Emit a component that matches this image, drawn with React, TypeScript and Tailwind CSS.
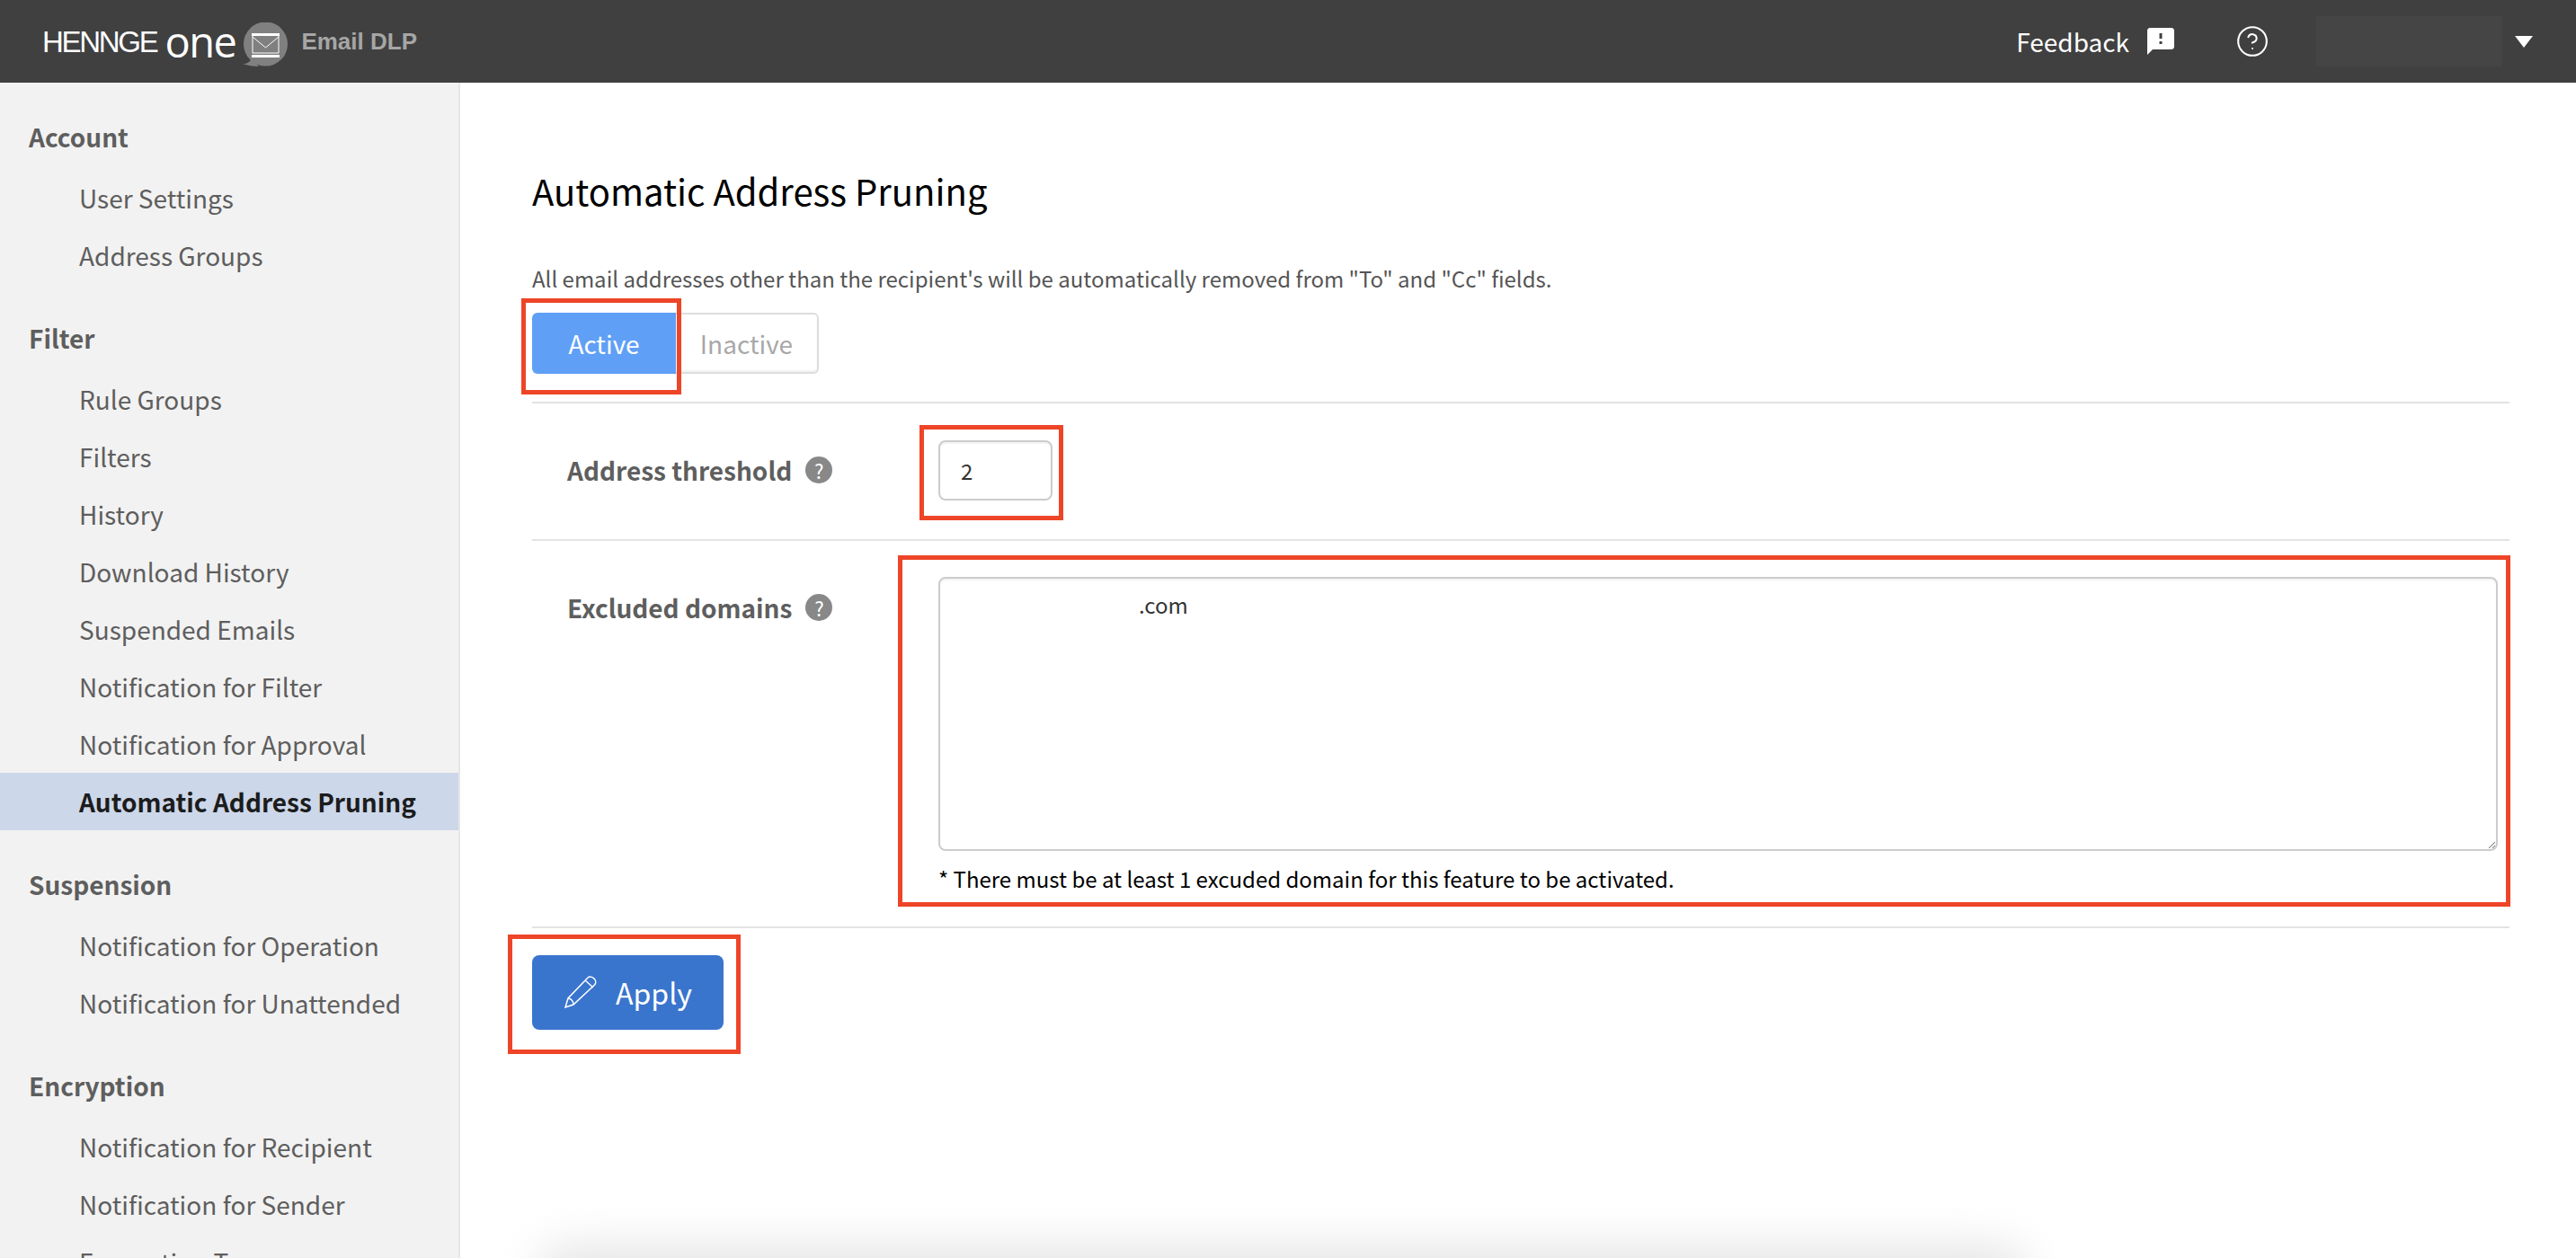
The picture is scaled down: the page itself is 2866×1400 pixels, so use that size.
import { CircleHelp } from "lucide-react"
import { MdFeedback } from "react-icons/md"

const font = { fontFamily: '"Noto Sans CJK JP", "Noto Sans", sans-serif' }

const groups = [
  { title: "Account", items: ["User Settings", "Address Groups"] },
  {
    title: "Filter",
    items: [
      "Rule Groups",
      "Filters",
      "History",
      "Download History",
      "Suspended Emails",
      "Notification for Filter",
      "Notification for Approval",
      "Automatic Address Pruning",
    ],
  },
  { title: "Suspension", items: ["Notification for Operation", "Notification for Unattended"] },
  { title: "Encryption", items: ["Notification for Recipient", "Notification for Sender", "Encryption Types"] },
]

function MailBadge() {
  return (
    <svg width="50" height="49" viewBox="0 0 50 49" className="shrink-0">
      <circle cx="25.5" cy="24" r="24.5" fill="#808080" />
      <path d="M0 46c5 0 8-2 10-6l8 9c-6 0-12-1-18-3z" fill="#808080" />
      <rect x="10" y="12" width="31" height="3" fill="#fff" />
      <rect x="10" y="36" width="31" height="3" fill="#fff" />
      <path d="M11 15v19h29V15M11 16l14.500 12L40 16" fill="none" stroke="#fff" strokeWidth="1" />
    </svg>
  )
}

function PencilIcon() {
  return (
    <svg width="36" height="36" viewBox="0 0 36 36" fill="none" stroke="#fff" strokeWidth="1.500" className="shrink-0">
      <path d="M1 35l3-10L26 2c2-1.500 5-1 7 1s2 5 1 6.500L10 32z" />
      <path d="M4 25c3 0 6 3 6 7M23 5l9 8" />
    </svg>
  )
}

function HelpDot() {
  return (
    <span className="ml-[15px] flex h-[30px] w-[30px] shrink-0 items-center justify-center rounded-full bg-[#888888] text-[22px] leading-none font-normal text-white">
      ?
    </span>
  )
}

function Header() {
  return (
    <header className="flex h-[92px] shrink-0 items-center bg-[#404040] pl-[47px] pr-[48px] text-white">
      <div className="flex items-center">
        <span className="text-[33px] leading-none tracking-[-2.300px]" style={{ fontFamily: '"Liberation Sans", sans-serif' }}>
          HENNGE
        </span>
        <span className="ml-[9px] text-[47px] leading-none tracking-[-1.500px]" style={{ fontFamily: '"Open Sans", sans-serif' }}>
          one
        </span>
        <div className="ml-[8px] mt-[6px]">
          <MailBadge />
        </div>
        <span className="ml-[15px] text-[26px] font-bold text-[#a6a6a6]" style={{ fontFamily: '"Liberation Sans", sans-serif' }}>
          Email DLP
        </span>
      </div>
      <div className="ml-auto flex items-center">
        <span className="text-[28px] leading-none">Feedback</span>
        <MdFeedback className="ml-[17px] text-[36px]" />
        <CircleHelp className="ml-[65px] h-[38px] w-[38px]" strokeWidth={1.300} />
        <div className="ml-[52px] h-[56px] w-[207px] bg-[#454545]" />
        <div className="ml-[14px] h-0 w-0 border-x-[10px] border-t-[13px] border-x-transparent border-t-white" />
      </div>
    </header>
  )
}

function Sidebar() {
  return (
    <aside className="w-[512px] shrink-0 overflow-hidden border-r-2 border-[#e6e6e6] bg-[#f2f2f2] pt-[28px]">
      {groups.map((group) => (
        <div key={group.title} className="mb-[28px]">
          <div className="mb-[4px] flex h-[64px] items-center pl-[32px] text-[28px] font-bold text-[#5e5e5e]">{group.title}</div>
          {group.items.map((item) => {
            const active = item === "Automatic Address Pruning"
            return (
              <div
                key={item}
                className={
                  active
                    ? "flex h-[64px] items-center bg-[#ccd7e9] pl-[88px] text-[28px] font-bold text-[#1c1c1c]"
                    : "flex h-[64px] items-center pl-[88px] text-[28px] text-[#5e5e5e]"
                }
              >
                {item}
              </div>
            )
          })}
        </div>
      ))}
    </aside>
  )
}

function Content() {
  return (
    <main className="relative flex-1 overflow-hidden pl-[80px] pr-[74px] pt-[90px]">
      <h1 className="text-[40px] leading-[60px] font-normal text-black">Automatic Address Pruning</h1>
      <p className="mt-[48px] text-[24px] leading-[40px] text-[#555555]">
        All email addresses other than the recipient's will be automatically removed from "To" and "Cc" fields.
      </p>

      <div className="mt-[18px] flex h-[68px]">
        <button className="h-full w-[160px] rounded-l-[6px] bg-[#609ff6] pb-[1px] text-[28px] text-white">Active</button>
        <button className="h-full w-[159px] rounded-r-[6px] border-2 border-l-0 border-[#dddddd] bg-white pb-[1px] text-[28px] text-[#a8a8a8] shadow-[inset_0_-2px_2px_rgba(0,0,0,0.05)]">
          Inactive
        </button>
      </div>

      <div className="mt-[31px] border-t-2 border-[#e3e3e3]">
        <div className="flex h-[153px] border-b-2 border-[#e3e3e3] pt-[41px]">
          <div className="flex h-[66px] w-[452px] shrink-0 items-center pl-[39px] text-[28px] font-bold text-[#5e5e5e]">
            Address threshold
            <HelpDot />
          </div>
          <input
            defaultValue="2"
            className="h-[67px] w-[127px] rounded-[8px] border-2 border-[#cccccc] bg-white pl-[23px] text-[24px] text-[#333333] shadow-[inset_0_2px_2px_rgba(0,0,0,0.05)] outline-none"
          />
        </div>

        <div className="flex border-b-2 border-[#e3e3e3] pt-[40px] pb-[35px]">
          <div className="flex h-[67px] w-[452px] shrink-0 items-center pl-[39px] text-[28px] font-bold text-[#5e5e5e]">
            Excluded domains
            <HelpDot />
          </div>
          <div className="min-w-0 flex-1 pr-[13px]">
            <textarea
              defaultValue=".com"
              className="block h-[305px] w-full rounded-[8px] border-2 border-[#cccccc] bg-white pl-[221px] pt-[11px] text-[24px] leading-[36px] text-[#333333] shadow-[inset_0_2px_2px_rgba(0,0,0,0.05)] outline-none"
            />
            <p className="mt-[13px] text-[24px] leading-[36px] text-black">
              * There must be at least 1 excuded domain for this feature to be activated.
            </p>
          </div>
        </div>
      </div>

      <button className="mt-[30px] flex h-[83px] w-[213px] items-center rounded-[8px] bg-[#3a75cd] pb-[1px] pl-[36px] text-[32px] leading-none text-white">
        <PencilIcon />
        <span className="ml-[21px]">Apply</span>
      </button>

      <div className="pointer-events-none absolute bottom-[-55px] left-[85px] h-[70px] w-[1660px] rounded-[40px] bg-[#e6e6e6] blur-[24px]" />
    </main>
  )
}

export default function App() {
  return (
    <div className="relative flex h-[1400px] w-[2866px] flex-col overflow-hidden bg-white" style={font}>
      <Header />
      <div className="flex min-h-0 flex-1">
        <Sidebar />
        <Content />
      </div>

      {/* annotation boxes */}
      <div className="pointer-events-none absolute left-[580px] top-[332px] h-[107px] w-[178px] border-[5px] border-[#ee4528]" />
      <div className="pointer-events-none absolute left-[1023px] top-[473px] h-[106px] w-[160px] border-[5px] border-[#ee4528]" />
      <div className="pointer-events-none absolute left-[999px] top-[618px] h-[391px] w-[1794px] border-[5px] border-[#ee4528]" />
      <div className="pointer-events-none absolute left-[565px] top-[1040px] h-[133px] w-[259px] border-[5px] border-[#ee4528]" />
    </div>
  )
}
